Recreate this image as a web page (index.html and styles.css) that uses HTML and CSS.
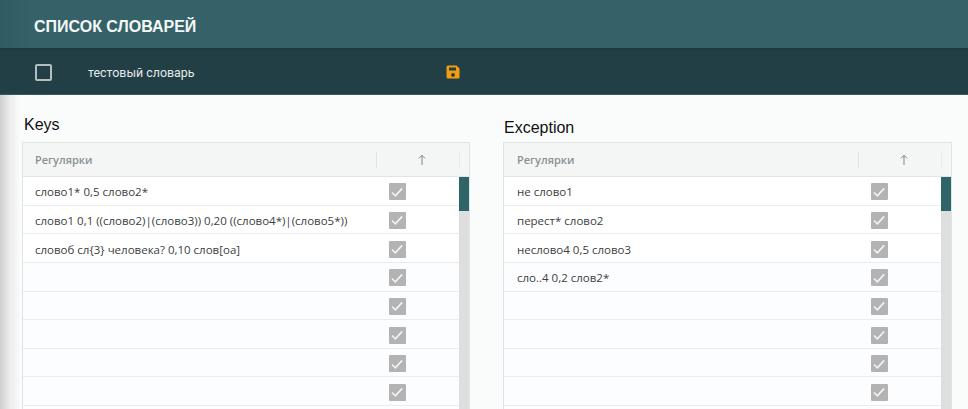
FILE: index.html
```html
<!DOCTYPE html>
<html lang="ru">
<head>
<meta charset="utf-8">
<title>Список словарей</title>
<link rel="stylesheet" href="styles.css">
</head>
<body>
<svg class="defs" width="0" height="0" aria-hidden="true">
  <symbol id="check" viewBox="0 0 18 18"><path d="M4 9.5l3.4 3.4L14.2 5.4" fill="none" stroke="#f4f4f4" stroke-width="1.6"/></symbol>
</svg>
<header class="topbar"><h1 class="title">СПИСОК СЛОВАРЕЙ</h1></header>
<div class="subbar">
  <span class="box"></span>
  <span class="dict-name">тестовый словарь</span>
  <svg class="save" width="14" height="14" viewBox="0 0 14 14" aria-hidden="true">
    <path fill-rule="evenodd" fill="#f39c12" d="M2 .5h8.6L13.5 3.4V12a1.5 1.5 0 0 1-1.5 1.5H2A1.5 1.5 0 0 1 .5 12V2A1.5 1.5 0 0 1 2 .5zM3 2.4v3h7v-3zM7 8a1.9 1.9 0 1 0 0 3.8A1.9 1.9 0 0 0 7 8z"/>
  </svg>
</div>
<main class="content">
  <section class="panel panel-keys">
    <h2 class="panel-title">Keys</h2>
    <div class="table">
      <div class="thead">
        <div class="th-name">Регулярки</div>
        <div class="th-check"><svg width="10" height="12" viewBox="0 0 10 12" aria-hidden="true"><path d="M5 11V1.5M2 4.3L5 1.3l3 3" fill="none" stroke="#7d8789" stroke-width="1"/></svg></div>
      </div>
      <div class="tbody">
        <div class="rows">
          <div class="row"><span class="cell">слово1* 0,5 слово2*</span><span class="tick"><svg width="18" height="18"><use href="#check"/></svg></span></div>
          <div class="row"><span class="cell">слово1 0,1 ((слово2)|(слово3)) 0,20 ((слово4*)|(слово5*))</span><span class="tick"><svg width="18" height="18"><use href="#check"/></svg></span></div>
          <div class="row"><span class="cell">словоб сл{3} человека? 0,10 слов[оа]</span><span class="tick"><svg width="18" height="18"><use href="#check"/></svg></span></div>
          <div class="row"><span class="cell"></span><span class="tick"><svg width="18" height="18"><use href="#check"/></svg></span></div>
          <div class="row"><span class="cell"></span><span class="tick"><svg width="18" height="18"><use href="#check"/></svg></span></div>
          <div class="row"><span class="cell"></span><span class="tick"><svg width="18" height="18"><use href="#check"/></svg></span></div>
          <div class="row"><span class="cell"></span><span class="tick"><svg width="18" height="18"><use href="#check"/></svg></span></div>
          <div class="row"><span class="cell"></span><span class="tick"><svg width="18" height="18"><use href="#check"/></svg></span></div>
          <div class="row"><span class="cell"></span><span class="tick"><svg width="18" height="18"><use href="#check"/></svg></span></div>
        </div>
        <div class="scroll"><div class="thumb"></div></div>
      </div>
    </div>
  </section>
  <section class="panel panel-exc">
    <h2 class="panel-title">Exception</h2>
    <div class="table">
      <div class="thead">
        <div class="th-name">Регулярки</div>
        <div class="th-check"><svg width="10" height="12" viewBox="0 0 10 12" aria-hidden="true"><path d="M5 11V1.5M2 4.3L5 1.3l3 3" fill="none" stroke="#7d8789" stroke-width="1"/></svg></div>
      </div>
      <div class="tbody">
        <div class="rows">
          <div class="row"><span class="cell">не слово1</span><span class="tick"><svg width="18" height="18"><use href="#check"/></svg></span></div>
          <div class="row"><span class="cell">перест* слово2</span><span class="tick"><svg width="18" height="18"><use href="#check"/></svg></span></div>
          <div class="row"><span class="cell">неслово4 0,5 слово3</span><span class="tick"><svg width="18" height="18"><use href="#check"/></svg></span></div>
          <div class="row"><span class="cell">сло..4 0,2 слов2*</span><span class="tick"><svg width="18" height="18"><use href="#check"/></svg></span></div>
          <div class="row"><span class="cell"></span><span class="tick"><svg width="18" height="18"><use href="#check"/></svg></span></div>
          <div class="row"><span class="cell"></span><span class="tick"><svg width="18" height="18"><use href="#check"/></svg></span></div>
          <div class="row"><span class="cell"></span><span class="tick"><svg width="18" height="18"><use href="#check"/></svg></span></div>
          <div class="row"><span class="cell"></span><span class="tick"><svg width="18" height="18"><use href="#check"/></svg></span></div>
          <div class="row"><span class="cell"></span><span class="tick"><svg width="18" height="18"><use href="#check"/></svg></span></div>
        </div>
        <div class="scroll"><div class="thumb"></div></div>
      </div>
    </div>
  </section>
</main>
</body>
</html>
```
FILE: styles.css
```css
* { box-sizing: border-box; }
html, body { margin: 0; height: 100%; }
body {
  width: 968px;
  height: 409px;
  overflow: hidden;
  background: #fafbfb;
  font-family: "Open Sans", sans-serif;
}
.defs { display: block; height: 0; }
.topbar {
  height: 48px;
  background: linear-gradient(90deg, #2f5c62 0, #356268 30px);
  display: flex;
  align-items: center;
  padding-left: 34px;
  padding-top: 5px;
}
.title {
  margin: 0;
  font: bold 16px "Liberation Sans", sans-serif;
  color: #f4f7f7;
}
.subbar {
  height: 47px;
  background: linear-gradient(180deg, #1d393f 0, #213f45 4px);
  border-bottom: 1px solid #3a5a5f;
  display: flex;
  align-items: center;
  padding-left: 35px;
  padding-top: 2px;
}
.box {
  width: 17px;
  height: 17px;
  border: 2px solid #b3bebf;
  border-radius: 2px;
}
.dict-name {
  margin-left: 36px;
  width: 359px;
  font: 400 12.4px Roboto, sans-serif;
  color: #e4eaea;
}
.save { margin-top: -1px; margin-left: -1px; }
.content {
  height: 314px;
  display: flex;
  padding-left: 22px;
  background: linear-gradient(90deg, #cfcfcf 0, #ececec 10px, #fafbfb 20px);
  overflow: hidden;
}
.panel { width: 448px; display: flex; flex-direction: column; flex: none; }
.panel-exc { margin-left: 33px; width: 449px; padding-top: 23px; }
.panel-keys { padding-top: 20px; }
.panel-title {
  margin: 0;
  font: 400 16px/19px "Liberation Sans", sans-serif;
  color: #111;
}
.panel-keys .panel-title { margin-bottom: 8px; margin-left: 2px; }
.panel-exc .panel-title { margin-bottom: 5px; margin-left: 1px; }
.table {
  border: 1px solid #dfe4e5;
  border-bottom: 0;
  background: #fff;
  flex: 1;
}
.thead {
  height: 34px;
  padding-top: 1px;
  background: #f4f6f6;
  border-bottom: 1px solid #dfe4e5;
  display: flex;
  align-items: center;
  font-size: 11px;
  font-weight: 600;
  color: #8a9192;
}
.th-name {
  width: 354px;
  height: 16px;
  padding-left: 12px;
  line-height: 16px;
  border-right: 1px solid #dfe4e5;
}
.panel-exc .th-name { width: 355px; padding-left: 13px; }
.th-check {
  width: 83px;
  height: 16px;
  padding-left: 8px;
  border-right: 1px solid #e6eaea;
  display: flex;
  justify-content: center;
  align-items: center;
}
.tbody { display: flex; }
.rows { flex: 1; }
.row {
  height: 28.65px;
  padding-top: 2px;
  border-bottom: 1px solid #e8ebf0;
  background: #fcfdfe;
  display: flex;
  align-items: center;
  font-size: 11.5px;
  color: #3a4042;
}
.row:nth-child(-n+3) { background: #fff; }
.cell { width: 365.5px; padding-left: 12px; white-space: nowrap; flex: none; }
.panel-exc .cell { width: 366.5px; padding-left: 13px; }
.tick {
  width: 17px;
  height: 17px;
  background: #b3b3b3;
  border-radius: 1px;
  display: flex;
  align-items: center;
  justify-content: center;
}
.tick svg { display: block; flex: none; }
.scroll { width: 10.5px; background: #dedede; flex: none; }
.thumb { height: 34px; background: #2f6468; }
```
